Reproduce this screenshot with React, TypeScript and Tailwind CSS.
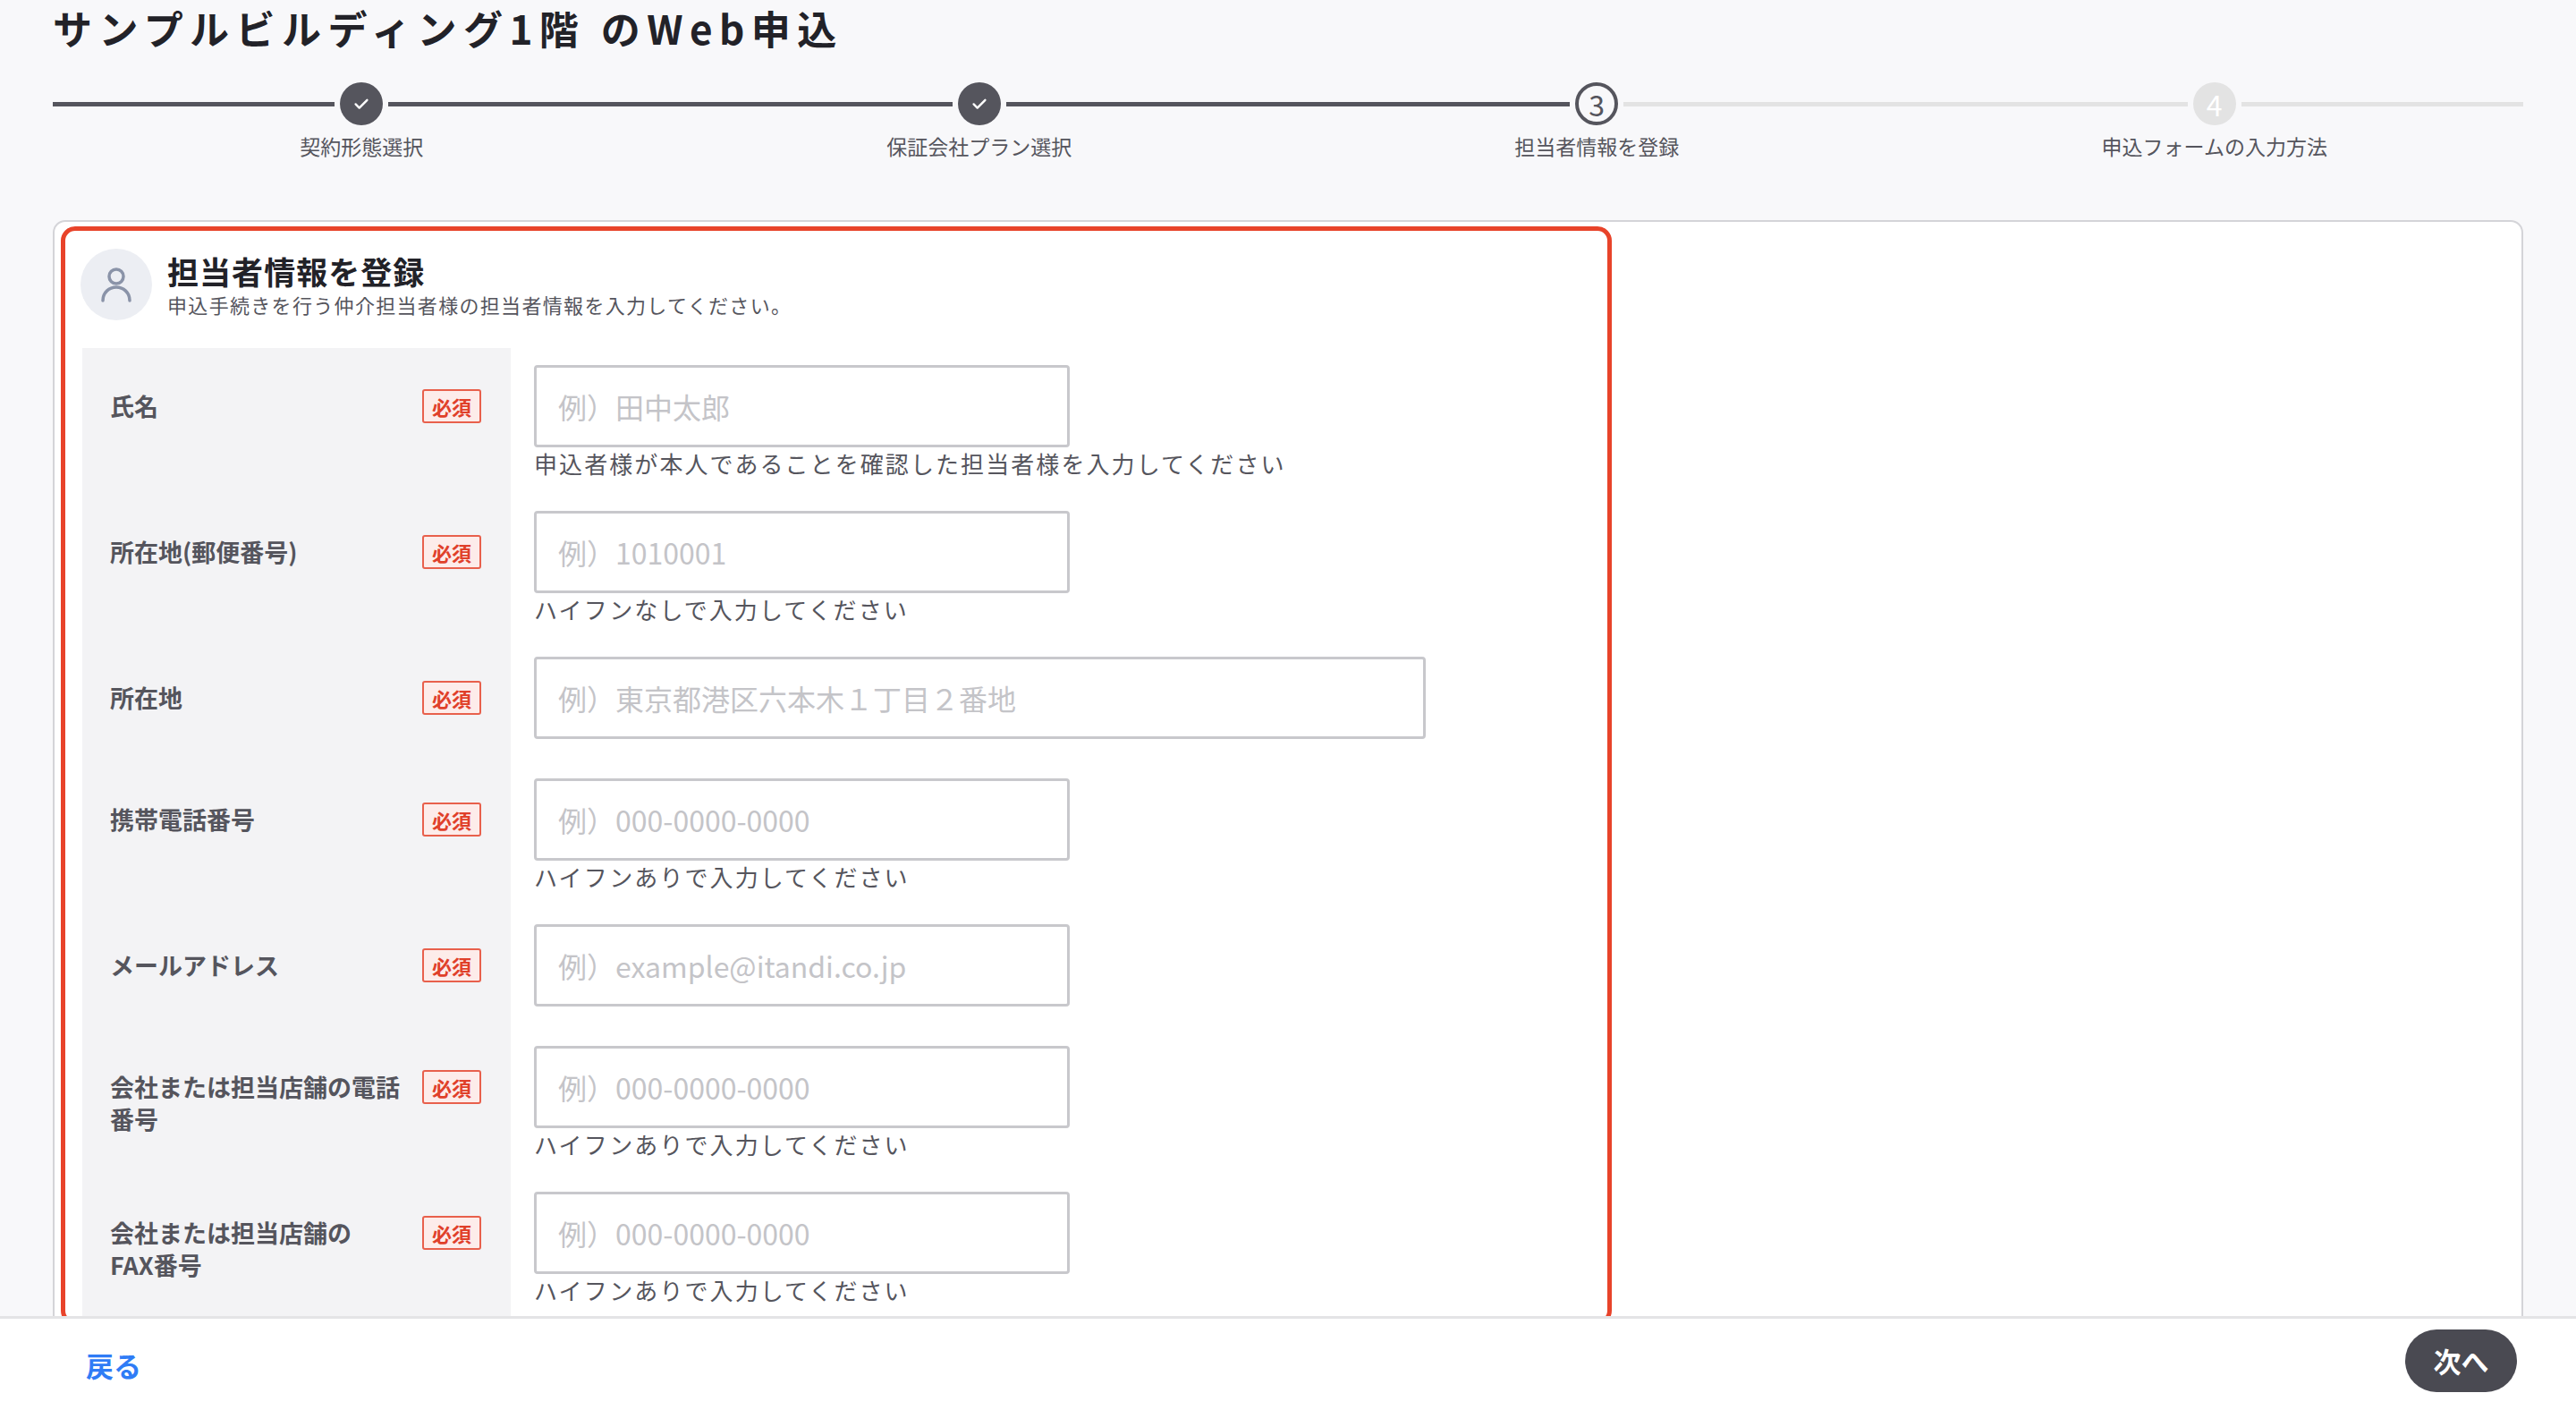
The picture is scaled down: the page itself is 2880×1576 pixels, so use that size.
import React from "react";

const F = { fontFamily: '"Noto Sans CJK JP", "Noto Sans", sans-serif' };

function Check() {
  return (
    <svg width="22" height="22" viewBox="0 0 24 24" fill="none" stroke="white" strokeWidth="2.6" strokeLinecap="round" strokeLinejoin="round">
      <path d="M5 12.5l4.5 4.5L19 7.5" />
    </svg>
  );
}

const steps = [
  { label: "契約形態選択", state: "done" },
  { label: "保証会社プラン選択", state: "done" },
  { label: "担当者情報を登録", state: "current" },
  { label: "申込フォームの入力方法", state: "todo" },
];

const rows = [
  { label: "氏名", ph: "例）田中太郎", help: "申込者様が本人であることを確認した担当者様を入力してください", wide: false },
  { label: "所在地(郵便番号)", ph: "例）1010001", help: "ハイフンなしで入力してください", wide: false },
  { label: "所在地", ph: "例）東京都港区六本木１丁目２番地", help: "", wide: true },
  { label: "携帯電話番号", ph: "例）000-0000-0000", help: "ハイフンありで入力してください", wide: false },
  { label: "メールアドレス", ph: "例）example@itandi.co.jp", help: "", wide: false },
  { label: "会社または担当店舗の電話\n番号", ph: "例）000-0000-0000", help: "ハイフンありで入力してください", wide: false },
  { label: "会社または担当店舗の\nFAX番号", ph: "例）000-0000-0000", help: "ハイフンありで入力してください", wide: false },
];

export default function App() {
  return (
    <div style={F} className="relative w-[2880px] h-[1576px] overflow-hidden bg-[#f8f8fa] text-[#222]">
      <div className="px-[59px]">
        <div className="h-[62px] leading-[62px] text-[44px] font-bold tracking-[0.17em] text-[#222228]">サンプルビルディング1階 のWeb申込</div>
        <div className="mt-[30px] flex">
          {steps.map((s, i) => (
            <div key={i} className="flex-1 flex flex-col items-center">
              <div className="w-full flex items-center">
                <div className={`flex-1 h-[5px] mr-[6px] ${s.state === "todo" ? "bg-[#e3e3e3]" : "bg-[#55555d]"}`} />
                {s.state === "done" && (
                  <div className="w-[48px] h-[48px] rounded-full bg-[#55555d] flex items-center justify-center"><Check /></div>
                )}
                {s.state === "current" && (
                  <div className="w-[48px] h-[48px] rounded-full border-[4px] border-[#55555d] flex items-center justify-center text-[32px] leading-none text-[#55555d]">3</div>
                )}
                {s.state === "todo" && (
                  <div className="w-[48px] h-[48px] rounded-full bg-[#e3e3e3] flex items-center justify-center text-[32px] leading-none text-white">4</div>
                )}
                <div className={`flex-1 h-[5px] ml-[6px] ${s.state === "done" ? "bg-[#55555d]" : "bg-[#e3e3e3]"}`} />
              </div>
              <div className="mt-[9px] leading-[28px] text-[23px] text-[#55555d]">{s.label}</div>
            </div>
          ))}
        </div>
        <div className="mt-[69px] bg-white border-2 border-[#d4d4d8] rounded-[14px] pl-[7px] pt-[5px] h-[1400px]">
          <div className="w-[1734px] border-[5px] border-[#e8432a] rounded-[16px] pl-[17px] pr-[2px] pt-[20px]">
            <div className="flex items-center gap-[17px]">
              <div className="w-[80px] h-[80px] rounded-full bg-[#eceef3] flex items-center justify-center">
                <svg width="40" height="44" viewBox="0 0 40 44" fill="none" stroke="#8a93a8" strokeWidth="3.5" strokeLinecap="round">
                  <circle cx="20" cy="13" r="8" />
                  <path d="M5 40c0-9 7-15 15-15s15 6 15 15" />
                </svg>
              </div>
              <div>
                <div className="text-[35px] font-bold leading-[44px] tracking-[0.03em] text-[#222228]">担当者情報を登録</div>
                <div className="text-[22px] leading-[30px] tracking-[0.06em] text-[#55555d]">申込手続きを行う仲介担当者様の担当者情報を入力してください。</div>
              </div>
            </div>
            <div className="mt-[31px] ml-[2px]">
              {rows.map((r, i) => (
                <div key={i} className="flex">
                  <div className="w-[479px] shrink-0 bg-[#f3f3f5] flex items-start pl-[31px] pr-[33px] pt-[51px]">
                    <div className="flex-1 whitespace-pre-line text-[27px] font-bold leading-[36px] -mt-[4px] text-[#55555d] pr-[4px]">{r.label}</div>
                    <div className="shrink-0 w-[66px] h-[38px] border-2 border-[#e8604c] bg-[#fdecea] text-[#e0402a] text-[22px] font-bold flex items-center justify-center rounded-[3px] -mt-[5px]">必須</div>
                  </div>
                  <div className={`flex-1 pl-[26px] pt-[19px] ${r.help ? "pb-[20px]" : "pb-[25px]"}`}>
                    <div className={`${r.wide ? "w-[997px]" : "w-[599px]"} h-[92px] border-[3px] border-[#c8c8cc] rounded-[4px] bg-white flex items-center pl-[24px] text-[32px] text-[#c4c4c8]`}>{r.ph}</div>
                    {r.help && <div className="mt-[4px] leading-[28px] text-[26px] tracking-[0.08em] text-[#55555d]">{r.help}</div>}
                  </div>
                </div>
              ))}
            </div>
          </div>
        </div>
      </div>
      <div className="absolute left-0 right-0 bottom-0 h-[105px] bg-white border-t-[3px] border-[#e4e4e6] flex items-center justify-between pl-[96px] pr-[66px]">
        <div className="text-[31px] font-bold text-[#2f7cf6] mt-[2px]">戻る</div>
        <div className="w-[125px] h-[70px] rounded-full bg-[#4a4a52] text-white text-[31px] font-bold flex items-center justify-center mt-[-8px]">次へ</div>
      </div>
    </div>
  );
}
